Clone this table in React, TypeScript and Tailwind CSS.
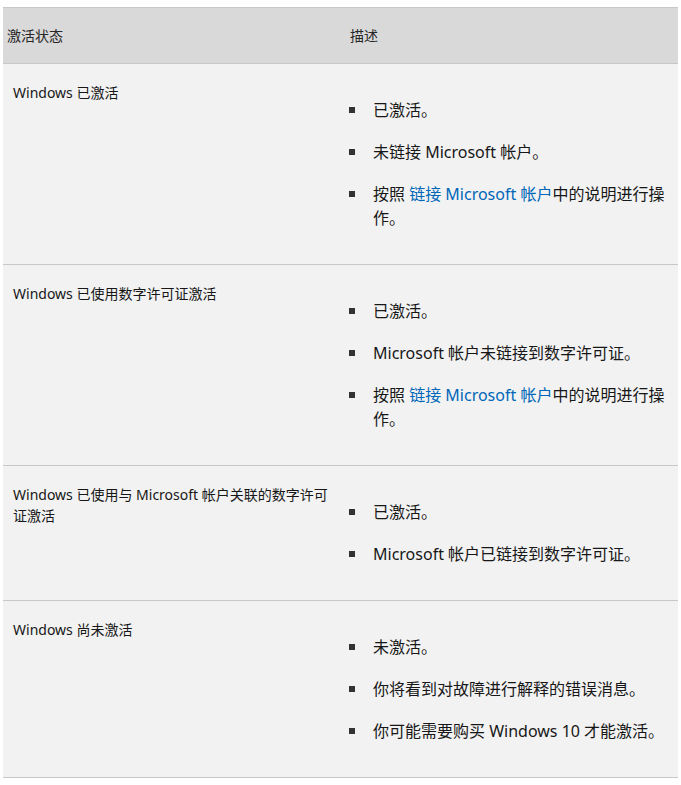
import type { ReactNode } from "react";

type Row = {
  status: string;
  items: ReactNode[];
};

const link = (
  <a href="#" className="text-[#0067b8]">
    链接 Microsoft 帐户
  </a>
);

const rows: Row[] = [
  {
    status: "Windows 已激活",
    items: [
      "已激活。",
      "未链接 Microsoft 帐户。",
      <>按照 {link}中的说明进行操作。</>,
    ],
  },
  {
    status: "Windows 已使用数字许可证激活",
    items: [
      "已激活。",
      "Microsoft 帐户未链接到数字许可证。",
      <>按照 {link}中的说明进行操作。</>,
    ],
  },
  {
    status: "Windows 已使用与 Microsoft 帐户关联的数字许可证激活",
    items: ["已激活。", "Microsoft 帐户已链接到数字许可证。"],
  },
  {
    status: "Windows 尚未激活",
    items: [
      "未激活。",
      "你将看到对故障进行解释的错误消息。",
      "你可能需要购买 Windows 10 才能激活。",
    ],
  },
];

export default function App() {
  return (
    <div
      className="min-h-screen bg-white px-[3px] pt-[7px] text-[#171717]"
      style={{ fontFamily: '"Noto Sans", "Noto Sans CJK SC", sans-serif' }}
    >
      <div className="border-y border-[#c8c8c8]">
        <div className="grid h-[56px] grid-cols-[342px_1fr] items-center border-b border-[#c8c8c8] bg-[#d9d9d9] text-[14px] text-[#262626]">
          <div className="pl-[4px]">激活状态</div>
          <div className="pl-[5px]">描述</div>
        </div>

        {rows.map((row, i) => (
          <div
            key={i}
            className="grid grid-cols-[342px_1fr] bg-[#f2f2f2] [&:not(:last-child)]:border-b [&:not(:last-child)]:border-[#c8c8c8]"
          >
            <div className="pl-[10px] pr-[14px] pt-[18px] text-[14px] leading-[21px]">
              {row.status}
            </div>
            <ul className="flex flex-col gap-[18px] py-[34px] pr-[10px] text-[16px] leading-[24px]">
              {row.items.map((item, j) => (
                <li key={j} className="flex">
                  <span className="mt-[9px] ml-[4px] mr-[18px] h-[6px] w-[6px] shrink-0 bg-[#333]" />
                  <span>{item}</span>
                </li>
              ))}
            </ul>
          </div>
        ))}
      </div>
    </div>
  );
}
